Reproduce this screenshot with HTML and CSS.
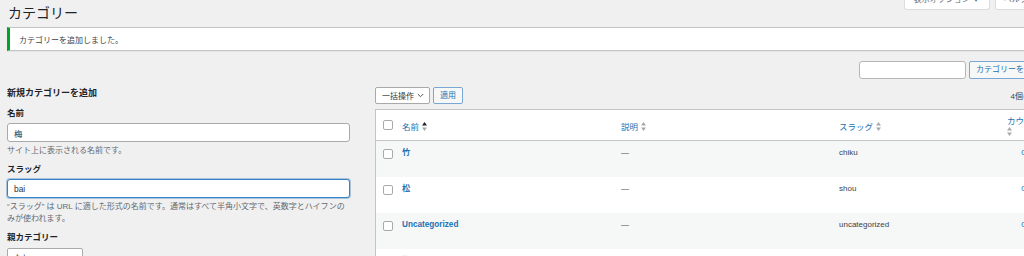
FILE: index.html
```html
<!DOCTYPE html>
<html lang="ja">
<head>
<meta charset="utf-8">
<title>カテゴリー</title>
<link rel="stylesheet" href="styles.css">
</head>
<body>
<div class="wrap">
  <div class="top">
    <h1 class="title">カテゴリー</h1>
    <div class="screen-meta">
      <button class="meta-btn meta-options">表示オプション ▼</button>
      <button class="meta-btn meta-help">ヘルプ ▼</button>
    </div>
  </div>
  <div class="notice"><p>カテゴリーを追加しました。</p></div>
  <div class="search-box">
    <input class="search-input" type="search" aria-label="カテゴリーを検索">
    <button class="btn">カテゴリーを検索</button>
  </div>
  <div class="col-wrap">
    <div class="col-left">
      <h2 class="form-title">新規カテゴリーを追加</h2>
      <div class="form-field">
        <label class="field-label">名前</label>
        <input class="text-input" type="text" value="梅">
        <p class="hint">サイト上に表示される名前です。</p>
      </div>
      <div class="form-field">
        <label class="field-label">スラッグ</label>
        <input class="text-input focused" type="text" value="bai">
        <p class="hint">“スラッグ” は URL に適した形式の名前です。通常はすべて半角小文字で、英数字とハイフンのみが使われます。</p>
      </div>
      <div class="form-field">
        <label class="field-label">親カテゴリー</label>
        <div class="select parent-select"><span>なし</span><svg class="chev" width="7" height="5" viewBox="0 0 7 5"><polyline points="0.8,1 3.5,3.7 6.2,1" fill="none" stroke="#50575e" stroke-width="1"/></svg></div>
      </div>
    </div>
    <div class="col-right">
      <div class="tablenav">
        <div class="select bulk-select"><span>一括操作</span><svg class="chev" width="7" height="5" viewBox="0 0 7 5"><polyline points="0.8,1 3.5,3.7 6.2,1" fill="none" stroke="#50575e" stroke-width="1"/></svg></div>
        <button class="btn apply">適用</button>
        <span class="num">4個の項目</span>
      </div>
      <table class="list">
        <colgroup>
          <col class="c-cb"><col class="c-name"><col class="c-desc"><col class="c-slug"><col class="c-count">
        </colgroup>
        <thead>
          <tr>
            <th class="check"><span class="cb"></span></th>
            <th>名前<svg class="sort" width="5" height="9" viewBox="0 0 10 18"><path d="M5 0L10 7H0Z" fill="#1d2327"/><path d="M0 11H10L5 18Z" fill="#a7aaad"/></svg></th>
            <th>説明<svg class="sort" width="5" height="9" viewBox="0 0 10 18"><path d="M5 0L10 7H0Z" fill="#a7aaad"/><path d="M0 11H10L5 18Z" fill="#a7aaad"/></svg></th>
            <th>スラッグ<svg class="sort" width="5" height="9" viewBox="0 0 10 18"><path d="M5 0L10 7H0Z" fill="#a7aaad"/><path d="M0 11H10L5 18Z" fill="#a7aaad"/></svg></th>
            <th class="count-head"><span class="count-label">カウント</span><span class="sort-line"><svg class="sort" width="5" height="9" viewBox="0 0 10 18"><path d="M5 0L10 7H0Z" fill="#a7aaad"/><path d="M0 11H10L5 18Z" fill="#a7aaad"/></svg></span></th>
          </tr>
        </thead>
        <tbody>
          <tr>
            <td class="check"><span class="cb"></span></td>
            <td><a class="row-title">竹</a></td>
            <td class="dash">—</td>
            <td>chiku</td>
            <td class="count"><a>0</a></td>
          </tr>
          <tr>
            <td class="check"><span class="cb"></span></td>
            <td><a class="row-title">松</a></td>
            <td class="dash">—</td>
            <td>shou</td>
            <td class="count"><a>0</a></td>
          </tr>
          <tr>
            <td class="check"><span class="cb"></span></td>
            <td><a class="row-title">Uncategorized</a></td>
            <td class="dash">—</td>
            <td>uncategorized</td>
            <td class="count"><a>0</a></td>
          </tr>
          <tr>
            <td class="check"><span class="cb"></span></td>
            <td><a class="row-title">梅</a></td>
            <td class="dash">—</td>
            <td>bai</td>
            <td class="count"><a>0</a></td>
          </tr>
        </tbody>
      </table>
    </div>
  </div>
</div>
</body>
</html>
```
FILE: styles.css
```css
* { box-sizing: border-box; }
html, body { margin: 0; padding: 0; }
body {
  background: #f0f0f1;
  font-family: "Liberation Sans", "Noto Sans CJK JP", sans-serif;
  font-size: 8px;
  color: #3c434a;
  width: 1024px;
  height: 256px;
  overflow: hidden;
}
.wrap { width: 1047px; padding-left: 7px; }

.top { display: flex; align-items: flex-start; justify-content: space-between; }
.title {
  margin: 4px 0 0 1px;
  font-size: 14px;
  line-height: 18px;
  font-weight: 400;
  color: #1d2327;
}
.screen-meta { display: flex; gap: 5px; margin-top: -9px; }
.meta-btn {
  height: 19px;
  padding: 0 9px;
  background: #fff;
  border: 1px solid #dcdcde;
  border-top: none;
  border-radius: 0 0 3px 3px;
  font-family: inherit;
  font-size: 8px;
  line-height: 18px;
  color: #646970;
  white-space: nowrap;
}
.meta-help { padding: 0 8px; }

.notice {
  margin-top: 5px;
  height: 24px;
  background: #fff;
  border: 1px solid #c3c4c7;
  border-left: 3px solid #00a32a;
  box-shadow: 0 1px 1px rgba(0,0,0,.04);
  padding: 7px 9px 3px;
}
.notice p { margin: 0; font-size: 8px; line-height: 12px; color: #3c434a; }

.search-box { display: flex; justify-content: flex-end; gap: 3px; margin-top: 10px; height: 18px; }
.search-input {
  width: 107px; height: 18px;
  border: 1px solid #b4b6b9; border-radius: 3px; background: #fff;
}
.btn {
  height: 18px;
  padding: 0 6px;
  border: 1px solid #7aa7d4;
  border-radius: 2px;
  background: #f6f7f7;
  color: #2271b1;
  font-family: inherit;
  font-size: 8px;
  line-height: 16px;
  white-space: nowrap;
}

.col-wrap { display: flex; gap: 25px; }
.col-left { width: 343px; flex: none; }
.col-right { flex: 1; padding-top: 8px; min-width: 0; }

.form-title {
  margin: 8px 0 8px;
  font-size: 9px;
  line-height: 12px;
  font-weight: 700;
  color: #1d2327;
}
.form-field + .form-field { margin-top: 6px; }
.field-label {
  display: block;
  font-size: 8.5px;
  line-height: 12px;
  font-weight: 700;
  color: #1d2327;
}
.text-input {
  display: block;
  width: 100%;
  height: 19px;
  margin-top: 4px;
  padding: 0 6px;
  border: 1px solid #a7aaad;
  border-radius: 3px;
  background: #fff;
  font-family: inherit;
  font-size: 8.4px;
  color: #2c3338;
}
.text-input.focused {
  border-color: #3582c4;
  box-shadow: 0 0 0 1px rgba(34,113,177,.35);
  outline: none;
}
.hint { margin: 3px 0 0; font-size: 8px; line-height: 12px; color: #646970; }

.select {
  display: flex;
  align-items: center;
  justify-content: space-between;
  background: #fff;
  border: 1px solid #a7aaad;
  border-radius: 2px;
  padding: 0 5px 0 6px;
  font-size: 8px;
  color: #2c3338;
}
.parent-select { width: 76px; height: 19px; margin-top: 5px; }

.tablenav { display: flex; align-items: center; gap: 3px; height: 17px; }
.bulk-select { width: 55px; height: 17px; }
.apply { height: 17px; line-height: 15px; }
.num { margin-left: auto; font-size: 8px; color: #3c434a; white-space: nowrap; }

.list {
  width: 672px;
  margin-top: 5px;
  table-layout: fixed;
  border-collapse: separate;
  border-spacing: 0;
  background: #fff;
  border: 1px solid #c3c4c7;
}
.c-cb { width: 20px; }
.c-name { width: 219px; }
.c-desc { width: 218px; }
.c-slug { width: 168px; }
.c-count { width: 45px; }

.list th {
  padding: 6px 6px 2px;
  font-size: 8.5px;
  line-height: 11px;
  font-weight: 400;
  text-align: left;
  vertical-align: middle;
  color: #2271b1;
  border-bottom: 1px solid #c3c4c7;
  white-space: nowrap;
}
.list th.check { padding: 0 0 0 7px; }
.count-label { display: block; }
.sort { display: inline-block; margin-left: 3px; vertical-align: -1px; }
.sort-line { display: block; }
.sort-line .sort { margin-left: 0; }

.list td {
  height: 36px;
  padding: 6px 6px 0;
  vertical-align: top;
  font-size: 8px;
  line-height: 12px;
  color: #3c434a;
  white-space: nowrap;
}
.list tbody tr:nth-child(odd) td { background: #f6f7f7; }
.list td.check { padding: 8px 0 0 7px; }
.cb {
  display: block;
  width: 10px;
  height: 10px;
  border: 1px solid #a7aaad;
  border-radius: 2px;
  background: #fff;
}
.row-title { font-size: 8.2px; font-weight: 700; color: #2271b1; }
.dash { color: #8c8f94; }
.count { text-align: center; }
.count a { color: #2271b1; }
```
